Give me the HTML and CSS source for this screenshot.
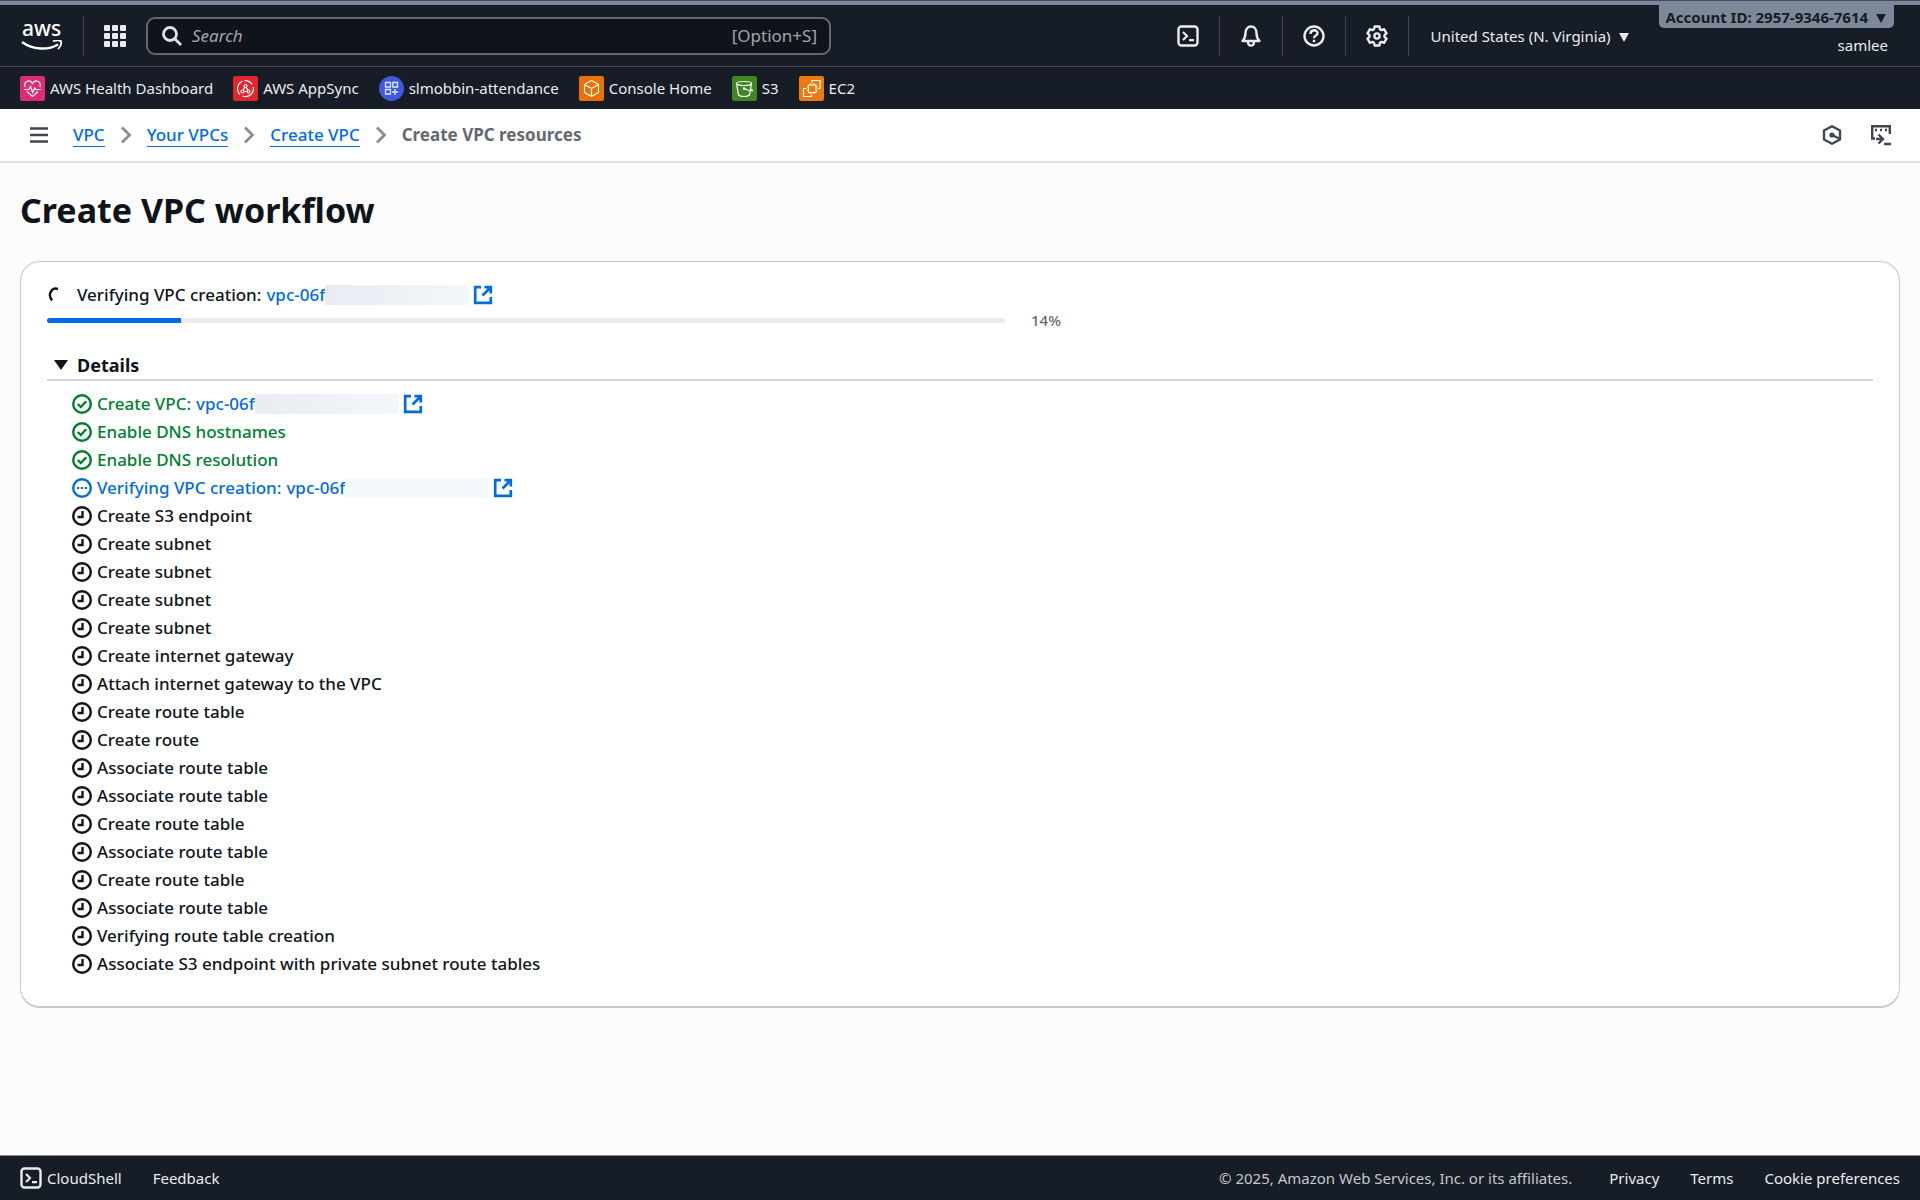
FILE: index.html
```html
<!DOCTYPE html>
<html lang="en">
<head>
    <meta charset="utf-8" />
    <title>Create VPC resources | VPC Console</title>
    <link rel="stylesheet" href="styles.css">
</head>
<body>

<!-- shared icons -->
<svg class="sprite" aria-hidden="true">
    <symbol id="shell" viewBox="0 0 22 22">
        <rect x="1.5" y="1.5" width="19" height="19" rx="3" fill="none" stroke="currentColor" stroke-width="2.4"/>
        <path d="M6 7l4 4-4 4M12 15.2h5" fill="none" stroke="currentColor" stroke-width="2.2"/>
    </symbol>
    <symbol id="chevron" viewBox="0 0 12 18">
        <path d="M2 1.5L9.5 9 2 16.5" fill="none" stroke="currentColor" stroke-width="2.8"/>
    </symbol>
    <symbol id="external" viewBox="0 0 20 20">
        <path d="M8 2.200H2.200v15.600h15.600V12M11.500 2.200h6.300v6.300M17.800 2.200L9.500 10.500" fill="none" stroke="currentColor" stroke-width="2.7"/>
    </symbol>
    <symbol id="done" viewBox="0 0 20 20">
        <circle cx="10" cy="10" r="8.8" fill="none" stroke="currentColor" stroke-width="2.4"/>
        <path d="M5.8 10l3 3 5.400-5.800" fill="none" stroke="currentColor" stroke-width="2.4"/>
    </symbol>
    <symbol id="running" viewBox="0 0 20 20">
        <circle cx="10" cy="10" r="8.8" fill="none" stroke="currentColor" stroke-width="2.4"/>
        <path d="M5 10h2.200M8.900 10h2.200M12.800 10H15" fill="none" stroke="currentColor" stroke-width="2.2"/>
    </symbol>
    <symbol id="waiting" viewBox="0 0 20 20">
        <circle cx="10" cy="10" r="8.8" fill="none" stroke="currentColor" stroke-width="2.4"/>
        <path d="M10.500 5v6H5.500" fill="none" stroke="currentColor" stroke-width="2.4"/>
    </symbol>
</svg>

<header class="top-nav">
    <a class="logo" href="#" aria-label="AWS home">
        <span>aws</span>
        <svg width="42" height="12" viewBox="0 0 42 12">
            <path d="M1 2c11 8 26 8.500 36 2.500" fill="none" stroke="currentColor" stroke-width="2.4"/>
            <path d="M32 1.200c3-1 6.500-1.200 8 0 .6 2-.5 5.500-3 8" fill="none" stroke="currentColor" stroke-width="1.8"/>
        </svg>
    </a>
    <button class="services" aria-label="Services">
        <svg width="22" height="22" viewBox="0 0 22 22" fill="currentColor">
            <rect x="0" y="0" width="6" height="6" rx="1"/><rect x="8" y="0" width="6" height="6" rx="1"/><rect x="16" y="0" width="6" height="6" rx="1"/>
            <rect x="0" y="8" width="6" height="6" rx="1"/><rect x="8" y="8" width="6" height="6" rx="1"/><rect x="16" y="8" width="6" height="6" rx="1"/>
            <rect x="0" y="16" width="6" height="6" rx="1"/><rect x="8" y="16" width="6" height="6" rx="1"/><rect x="16" y="16" width="6" height="6" rx="1"/>
        </svg>
    </button>
    <label class="search">
        <svg width="20" height="20" viewBox="0 0 20 20" fill="none" stroke="currentColor" stroke-width="2.8">
            <circle cx="8" cy="8" r="6.500"/><path d="M12.500 12.500L19 19"/>
        </svg>
        <input type="text" placeholder="Search" aria-label="Search">
        <span>[Option+S]</span>
    </label>

    <div class="tools">
        <button aria-label="CloudShell"><svg width="22" height="22"><use href="#shell"/></svg></button>
        <button aria-label="Notifications">
            <svg width="22" height="22" viewBox="0 0 22 22" fill="none" stroke="currentColor" stroke-width="2.4">
                <path d="M2.500 16c2-2 3-3.500 3-8 0-4 2.500-6.500 5.500-6.500s5.500 2.500 5.500 6.500c0 4.500 1 6 3 8z" stroke-linejoin="round"/>
                <path d="M8 16.500c0 5.500 6 5.500 6 0"/>
            </svg>
        </button>
        <button aria-label="Help">
            <svg width="22" height="22" viewBox="0 0 22 22" fill="none" stroke="currentColor" stroke-width="2.4">
                <circle cx="11" cy="11" r="9.500"/>
                <path d="M7.500 9c0-4.800 7-4.800 7-.8 0 2.500-3.500 2.300-3.500 5M11 14.800v2.400"/>
            </svg>
        </button>
        <button aria-label="Settings">
            <svg width="22" height="22" viewBox="0 0 22 22" fill="none" stroke="currentColor" stroke-width="2.4" stroke-linejoin="round">
                <path d="M8.600 1.500h4.800l.6 2.700 1.500.9 2.600-.9 2.400 4.100-2 1.800v1.800l2 1.800-2.400 4.100-2.600-.9-1.500.9-.6 2.700H8.600L8 17.800l-1.500-.9-2.600.9-2.400-4.100 2-1.800v-1.800l-2-1.800 2.400-4.100 2.600.9L8 4.200z"/>
                <circle cx="11" cy="11" r="2.600"/>
            </svg>
        </button>
    </div>
    <button class="region">United States (N. Virginia) <i class="caret"></i></button>
    <div class="account">
        <button class="account-id">Account ID: 2957-9346-7614 <i class="caret"></i></button>
        <span class="user">samlee</span>
    </div>
</header>

<nav class="favorites" aria-label="Favorites">
    <a href="#">
        <svg width="25" height="25" viewBox="0 0 25 25">
            <rect width="25" height="25" rx="2" fill="#dd2c73"/>
            <g fill="none" stroke="#fff" stroke-width="1.2">
                <path d="M5 11c-1.500-6 5-8 7.500-3.500C15 3 21.500 5 20 11M7 15.500l5.500 5 5.500-5"/>
                <path d="M4 13.500h5l1.500-3 2.200 6 2-4.500 1 1.500h5"/>
            </g>
        </svg>AWS Health Dashboard</a>
    <a href="#">
        <svg width="25" height="25" viewBox="0 0 25 25">
            <rect width="25" height="25" rx="2" fill="#e3252c"/>
            <g fill="none" stroke="#fff" stroke-width="1.2">
                <path d="M7 18.500a8 8 0 0 1 2.500-13.200M11.500 4.700a8 8 0 0 1 7.500 3.800M20.300 11a8 8 0 0 1-10.800 9"/>
                <circle cx="12.500" cy="10" r="1.500"/><circle cx="9.500" cy="15.500" r="1.500"/><circle cx="15.500" cy="15.500" r="1.500"/>
                <path d="M11.800 11.300l-1.600 2.900M13.200 11.300l1.600 2.900M11 15.500h3"/>
            </g>
        </svg>AWS AppSync</a>
    <a href="#">
        <svg width="25" height="25" viewBox="0 0 25 25">
            <circle cx="12.500" cy="12.500" r="12.500" fill="#3f5bdc"/>
            <path d="M6.500 6.500h5V11h-5zM13.800 6.500h4.700V11h-4.700zM6.500 13.500h5V18h-5zM16 13v6M13 16h6" fill="none" stroke="#dfe6ff" stroke-width="1.3"/>
        </svg>slmobbin-attendance</a>
    <a href="#">
        <svg width="25" height="25" viewBox="0 0 25 25">
            <rect width="25" height="25" rx="2" fill="#ed7100"/>
            <path d="M12.500 4.500l7 4v8l-7 4-7-4v-8zM5.500 8.500l7 4 7-4M12.500 12.500v8" fill="none" stroke="#fff" stroke-width="1.2" stroke-linejoin="round"/>
        </svg>Console Home</a>
    <a href="#">
        <svg width="25" height="25" viewBox="0 0 25 25">
            <rect width="25" height="25" rx="2" fill="#3f8624"/>
            <g fill="none" stroke="#fff" stroke-width="1.2">
                <ellipse cx="12" cy="7.500" rx="7.500" ry="2"/>
                <path d="M4.500 7.500l2 11.500c2 2 9 2 11 0l2-11.500M12 12.500c3 1.500 6 2.500 8.500 2.200-.2-1-1.500-1.700-2.500-2"/>
            </g>
            <circle cx="12" cy="12.500" r="1.200" fill="#fff"/>
        </svg>S3</a>
    <a href="#">
        <svg width="25" height="25" viewBox="0 0 25 25">
            <rect width="25" height="25" rx="2" fill="#ed7a0c"/>
            <path d="M9.500 9h7.500v7.500H9.500zM13 6.500V4.500h8v8h-2M7.500 12.500h-3v8h8v-2M11.500 7.500V9M15 7.500V9M8 11h1.500M8 14.500h1.500M17 11h1.500M17 14.500h1.500M11.500 16.500V18M15 16.500V18" fill="none" stroke="#fff" stroke-width="1.2"/>
        </svg>EC2</a>
</nav>

<div class="crumb-bar">
    <button class="menu" aria-label="Open menu">
        <svg width="18" height="16" viewBox="0 0 18 16" stroke="currentColor" stroke-width="2.4"><path d="M0 1.500h18M0 8h18M0 14.500h18"/></svg>
    </button>
    <nav class="crumbs" aria-label="Breadcrumbs">
        <a href="#">VPC</a>
        <svg width="12" height="18"><use href="#chevron"/></svg>
        <a href="#">Your VPCs</a>
        <svg width="12" height="18"><use href="#chevron"/></svg>
        <a href="#">Create VPC</a>
        <svg width="12" height="18"><use href="#chevron"/></svg>
        <span>Create VPC resources</span>
    </nav>
    <div class="crumb-tools">
        <button aria-label="Amazon Q">
            <svg width="20" height="20" viewBox="0 0 20 20" fill="none" stroke="currentColor" stroke-width="2.4">
                <path d="M10 1.200l8 4.300v9l-8 4.300-8-4.300v-9z" stroke-linejoin="round"/>
                <circle cx="10" cy="10" r="2.600" fill="currentColor" stroke="none"/><path d="M10 10l7 3.500"/>
            </svg>
        </button>
        <button aria-label="CloudShell drawer">
            <svg width="22" height="22" viewBox="0 0 22 22" fill="none" stroke="currentColor" stroke-width="2.4">
                <path d="M5 14.500H2.200V2.200h17.600V10M5 6h2M10 6h2M15 6h2M6 15h6.500M8.500 10.500l4.500 4.500-4.500 4.500M14 20h7"/>
            </svg>
        </button>
    </div>
</div>

<main class="content">
    <h1>Create VPC workflow</h1>

    <section class="card">
        <div class="status">
            <svg class="spinner" width="16" height="18" viewBox="0 0 16 18"><path d="M11 3C5 1 0 8 5 14.500" fill="none" stroke="currentColor" stroke-width="2.4"/></svg>
            <label for="progress">Verifying VPC creation:</label>
            <a href="#">vpc-06f<span class="redacted"></span><svg width="20" height="20"><use href="#external"/></svg></a>
        </div>
        <div class="progress-row">
            <progress id="progress" max="100" value="14"></progress>
            <span>14%</span>
        </div>

        <details open>
            <summary><i class="caret"></i>Details</summary>
            <ul class="steps">
                <li class="done"><svg><use href="#done"/></svg>Create VPC: <a href="#">vpc-06f<span class="redacted"></span><svg><use href="#external"/></svg></a></li>
                <li class="done"><svg><use href="#done"/></svg>Enable DNS hostnames</li>
                <li class="done"><svg><use href="#done"/></svg>Enable DNS resolution</li>
                <li class="running"><svg><use href="#running"/></svg>Verifying VPC creation: <a href="#">vpc-06f<span class="redacted light"></span><svg><use href="#external"/></svg></a></li>
                <li><svg><use href="#waiting"/></svg>Create S3 endpoint</li>
                <li><svg><use href="#waiting"/></svg>Create subnet</li>
                <li><svg><use href="#waiting"/></svg>Create subnet</li>
                <li><svg><use href="#waiting"/></svg>Create subnet</li>
                <li><svg><use href="#waiting"/></svg>Create subnet</li>
                <li><svg><use href="#waiting"/></svg>Create internet gateway</li>
                <li><svg><use href="#waiting"/></svg>Attach internet gateway to the VPC</li>
                <li><svg><use href="#waiting"/></svg>Create route table</li>
                <li><svg><use href="#waiting"/></svg>Create route</li>
                <li><svg><use href="#waiting"/></svg>Associate route table</li>
                <li><svg><use href="#waiting"/></svg>Associate route table</li>
                <li><svg><use href="#waiting"/></svg>Create route table</li>
                <li><svg><use href="#waiting"/></svg>Associate route table</li>
                <li><svg><use href="#waiting"/></svg>Create route table</li>
                <li><svg><use href="#waiting"/></svg>Associate route table</li>
                <li><svg><use href="#waiting"/></svg>Verifying route table creation</li>
                <li><svg><use href="#waiting"/></svg>Associate S3 endpoint with private subnet route tables</li>
            </ul>
        </details>
    </section>
</main>

<footer class="footer">
    <button><svg width="22" height="22"><use href="#shell"/></svg>CloudShell</button>
    <a href="#">Feedback</a>
    <span class="copyright">© 2025, Amazon Web Services, Inc. or its affiliates.</span>
    <a href="#">Privacy</a>
    <a href="#">Terms</a>
    <a href="#">Cookie preferences</a>
</footer>

</body>
</html>
```
FILE: styles.css
```css
* {
    box-sizing: border-box;
}

body {
    margin: 0;
    min-height: 100vh;
    display: flex;
    flex-direction: column;
    border-top: 1px solid #434d66;
    font-family: "Noto Sans", "Open Sans", sans-serif;
    font-size: 17px;
    font-weight: 500;
    line-height: 28px;
    color: #0f141a;
    background: #fcfcfd;
}

a {
    color: #006ce0;
    text-decoration: none;
}

button {
    padding: 0;
    border: 0;
    background: none;
    color: inherit;
    font: inherit;
    cursor: pointer;
}

svg {
    display: block;
    flex: none;
}

.sprite {
    position: absolute;
    width: 0;
    height: 0;
}

/* down arrow used by menus and the details header */
.caret {
    display: inline-block;
    border: 5px solid transparent;
    border-top: 9px solid currentColor;
    border-bottom: 0;
}

/* top bar */
.top-nav {
    display: flex;
    align-items: center;
    height: 66px;
    padding: 0 26px 0 21px;
    border-top: 4px solid #7d8998;
    border-bottom: 1px solid #424650;
    background: #161d26;
    color: #ebebf0;
    font-size: 15px;
    font-weight: 400;
}

.logo {
    width: 63px;
    height: 40px;
    border-right: 1px solid #424650;
    color: #fff;
}

.logo span {
    display: block;
    font-size: 21px;
    font-weight: 500;
    line-height: 16px;
    padding: 4px 0 4px 1px;
    height: 24px;
}

.services {
    margin: 0 20px;
}

.search {
    display: flex;
    align-items: center;
    width: 685px;
    height: 38px;
    padding: 0 12px 0 14px;
    border: 2px solid #656871;
    border-radius: 9px;
    background: #0f141a;
    color: #a4a4ad;
    font-size: 17px;
}

.search svg {
    color: #dedee3;
}

.search input {
    flex: 1;
    min-width: 0;
    padding: 0 10px;
    border: 0;
    outline: 0;
    background: none;
    color: #fff;
    font: inherit;
}

.search input::placeholder {
    color: #a4a4ad;
    font-style: italic;
}

.tools {
    display: flex;
    margin-left: auto;
}

.tools button {
    display: flex;
    align-items: center;
    justify-content: center;
    width: 63px;
    height: 40px;
    border-right: 1px solid #424650;
}

.region {
    margin: 0 30px 0 22px;
}

.region .caret {
    margin-left: 5px;
}

.account {
    display: flex;
    flex-direction: column;
    align-items: flex-end;
    align-self: stretch;
    line-height: 22px;
}

.account-id {
    height: 23px;
    padding: 0 8px 0 6px;
    border-radius: 0 0 5px 5px;
    background: #7d8998;
    color: #161d26;
    font-weight: 700;
}

.account-id .caret {
    margin-left: 4px;
}

.user {
    margin: 6px 6px 0 0;
}

.favorites {
    display: flex;
    align-items: center;
    gap: 20px;
    height: 42px;
    padding: 0 20px;
    background: #161d26;
    font-size: 15px;
    font-weight: 400;
}

.favorites a {
    display: flex;
    align-items: center;
    gap: 5px;
    color: #ebebf0;
}

/* breadcrumbs */
.crumb-bar {
    display: flex;
    align-items: center;
    height: 54px;
    padding: 0 28px 0 30px;
    border-bottom: 2px solid #dedee3;
    background: #fff;
    color: #424650;
}

.crumbs {
    display: flex;
    align-items: center;
    gap: 15px;
    margin-left: 25px;
}

.crumbs a {
    line-height: 23px;
    border-bottom: 1px solid #006ce0;
}

.crumbs svg {
    color: #8c8c94;
}

.crumbs span {
    color: #656871;
    font-weight: 700;
}

.crumb-tools {
    display: flex;
    align-items: center;
    gap: 28px;
    margin-left: auto;
}

/* page body */
.content {
    flex: 1;
    padding: 24px 20px 40px;
}

h1 {
    margin: 0 0 28px;
    font-size: 34px;
    line-height: 46px;
}

.card {
    padding: 19px 26px 28px;
    border: 1px solid #c6c6cd;
    border-bottom-width: 2px;
    border-radius: 20px;
    background: #fff;
}

.status {
    display: flex;
    align-items: center;
}

.status label {
    margin: 0 5px 0 14px;
}

.status a,
.steps a {
    display: flex;
    align-items: center;
}

.redacted {
    width: 144px;
    height: 20px;
    margin-right: 4px;
    background: linear-gradient(90deg, #e8ecf2, #f3f6fa);
}

.redacted.light {
    background: #f6f9fc;
}

.progress-row {
    display: flex;
    align-items: center;
    gap: 26px;
    height: 22px;
    color: #656871;
    font-size: 15px;
}

progress {
    appearance: none;
    width: 958px;
    height: 5px;
    border: 0;
}

progress::-webkit-progress-bar {
    border-radius: 3px;
    background: #ebebf0;
}

progress::-webkit-progress-value {
    border-radius: 3px 0 0 3px;
    background: #006ce0;
}

summary {
    display: flex;
    align-items: center;
    gap: 9px;
    margin-top: 20px;
    padding: 0 7px;
    border-bottom: 2px solid #d5d5db;
    font-size: 18px;
    font-weight: 700;
    cursor: pointer;
}

summary .caret {
    border-width: 10px 7px 0;
}

.steps {
    margin: 9px 0 0;
    padding: 0 0 0 25px;
    list-style: none;
}

.steps li {
    display: flex;
    align-items: center;
    gap: 5px;
}

.steps svg {
    width: 20px;
    height: 20px;
}

.steps .done {
    color: #00802f;
}

.steps .running {
    color: #006ce0;
}

/* bottom bar */
.footer {
    display: flex;
    align-items: center;
    gap: 31px;
    height: 45px;
    padding: 0 20px;
    border-top: 1px solid #8c8c94;
    background: #161d26;
    color: #ebebf0;
    font-size: 15px;
    font-weight: 400;
}

.footer button {
    display: flex;
    align-items: center;
    gap: 5px;
}

.footer a {
    color: inherit;
}

.copyright {
    margin: 0 6px 0 auto;
    color: #c6c6cd;
}
```
